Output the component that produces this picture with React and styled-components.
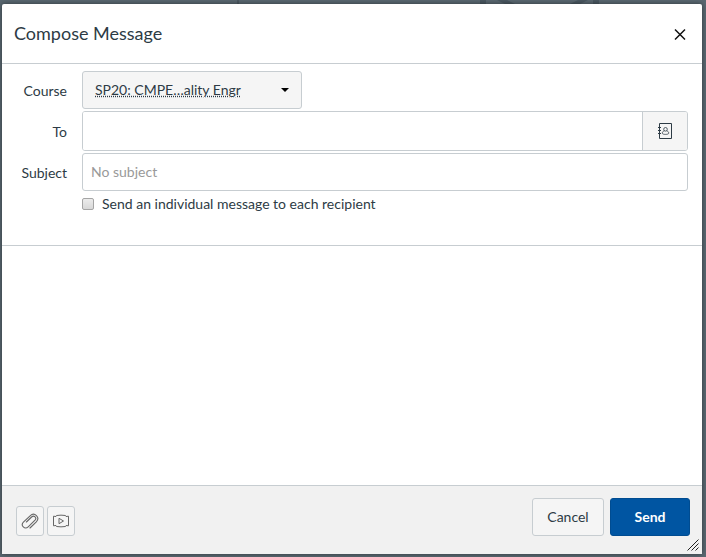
import React from "react";
import styled, { createGlobalStyle, css } from "styled-components";

const GlobalStyle = createGlobalStyle`
  *, *::before, *::after { box-sizing: border-box; }
  body {
    margin: 0;
    background: #5a6871;
    color: #2d3b45;
    font: 14px/20px Lato, sans-serif;
  }
  button, input, select, textarea { font: inherit; color: inherit; margin: 0; }
`;

const Page = styled.div`
  position: relative;
  display: flex;
  min-height: 100vh;
  padding: 4px 4px 3px 2px;
`;

const Backdrop = styled.svg`
  position: absolute;
  top: 0;
  left: 0;
  width: 100%;
  height: 4px;
`;

const Dialog = styled.form`
  position: relative;
  flex: 1;
  display: flex;
  flex-direction: column;
  min-width: 0;
  background: #fff;
  border-radius: 2px;
  box-shadow: 0 0 5px rgba(0, 0, 0, 0.5);
`;

const Header = styled.header`
  display: flex;
  align-items: center;
  justify-content: space-between;
  height: 60px;
  padding: 0 12px;
  border-bottom: 1px solid #c7cdd1;
`;

const Title = styled.h1`
  margin: 0;
  padding-bottom: 2px;
  font-size: 18px;
  line-height: 24px;
  font-weight: 400;
`;

const CloseButton = styled.button`
  display: flex;
  padding: 4px;
  border: 0;
  background: none;
  color: #111;
`;

const Fields = styled.section`
  display: grid;
  grid-template-columns: 65px 1fr;
  column-gap: 15px;
  row-gap: 2px;
  align-items: center;
  padding: 7px 14px 30px 0;
  border-bottom: 1px solid #c7cdd1;
`;

const Label = styled.label`
  text-align: right;
  padding-top: 2px;
`;

const outlined = css`
  border: 1px solid #c7cdd1;
  border-radius: 3px;
`;

const SelectWrap = styled.div`
  display: grid;
  align-items: center;
  width: 220px;
  > * { grid-area: 1 / 1; }
  > svg { justify-self: end; margin-right: 13px; pointer-events: none; }
`;

const Select = styled.select`
  ${outlined}
  appearance: none;
  width: 100%;
  height: 38px;
  padding: 0 32px 0 12px;
  background: #f5f5f5;
  text-decoration: underline dotted;
`;

const Recipients = styled.div`
  ${outlined}
  display: flex;
  height: 40px;
  overflow: hidden;
`;

const RecipientInput = styled.input`
  flex: 1;
  min-width: 0;
  padding: 0 8px;
  border: 0;
  background: #fff;
`;

const AddressButton = styled.button`
  display: flex;
  align-items: center;
  justify-content: center;
  width: 45px;
  padding: 0;
  border: 0;
  border-left: 1px solid #c7cdd1;
  background: #f5f5f5;
`;

const SubjectInput = styled.input`
  ${outlined}
  width: 100%;
  height: 38px;
  padding: 0 8px 2px;
  background: #fff;
  &::placeholder { color: #999; opacity: 1; }
`;

const CheckLabel = styled.label`
  grid-column: 2;
  display: flex;
  align-items: center;
  gap: 8px;
  height: 22px;
`;

const Checkbox = styled.input`
  appearance: none;
  width: 12px;
  height: 12px;
  border: 1px solid #a5a5a5;
  border-radius: 2px;
  background: linear-gradient(#ececec, #d8d8d8);
  &:checked { background: #0055a2; }
`;

const Message = styled.textarea`
  flex: 1;
  width: 100%;
  min-height: 80px;
  padding: 12px;
  border: 0;
  resize: none;
  background: #fff;
`;

const Footer = styled.footer`
  position: relative;
  display: flex;
  align-items: center;
  justify-content: space-between;
  padding: 12px 12px 18px 14px;
  border-top: 1px solid #c7cdd1;
  background: #f1f1f1;
`;

const Group = styled.div`
  display: flex;
  align-items: flex-end;
  align-self: flex-end;
  gap: ${(p) => p.$gap}px;
`;

const IconButton = styled.button`
  ${outlined}
  display: flex;
  align-items: center;
  justify-content: center;
  width: 28px;
  height: 30px;
  padding: 0;
  background: #f5f5f5;
  color: #666;
`;

const Button = styled.button`
  ${outlined}
  min-width: ${(p) => (p.$primary ? 80 : 72)}px;
  height: 38px;
  padding: 0 12px;
  background: #f5f5f5;
  ${(p) =>
    p.$primary &&
    css`
      border-color: #004c91;
      background: #0055a2;
      color: #fff;
      font-weight: 700;
    `}
`;

const ResizeGrip = styled.svg`
  position: absolute;
  right: 3px;
  bottom: 3px;
`;

export default function App() {
  return (
    <>
      <GlobalStyle />
      <Page>
        <Backdrop aria-hidden="true">
          <rect x="237" y="0" width="2" height="4" fill="#4c5962" />
          <path d="M480 0h6v4h-6zM497 0h10l8 4h-10zM578 0h10l-8 4h-10zM593 0h6v4h-6z" fill="#4a5861" />
        </Backdrop>
        <Dialog role="dialog" aria-labelledby="title" onSubmit={(e) => e.preventDefault()}>
          <Header>
            <Title id="title">Compose Message</Title>
            <CloseButton type="button" aria-label="Close">
              <svg width="12" height="12" viewBox="0 0 12 12" fill="none" stroke="currentColor" strokeWidth="1.5">
                <path d="M1 1.500l10 10M11 1.500L1 11.500" />
              </svg>
            </CloseButton>
          </Header>
          <Fields>
            <Label htmlFor="course">Course</Label>
            <SelectWrap>
              <Select id="course">
                <option>SP20: CMPE…ality Engr</option>
              </Select>
              <svg width="8" height="4" viewBox="0 0 8 4" aria-hidden="true">
                <path d="M0 0h8L4 4z" fill="#000" />
              </svg>
            </SelectWrap>
            <Label htmlFor="to">To</Label>
            <Recipients>
              <RecipientInput id="to" type="text" />
              <AddressButton type="button" aria-label="Address book">
                <svg width="15" height="16" viewBox="0 0 15 16" fill="none" stroke="#2d3b45">
                  <path d="M1.500 .5h12v15h-12z" />
                  <path d="M0 4.500h3M0 7.500h3M0 10.500h3" />
                  <circle cx="7.500" cy="6.300" r="1.800" strokeWidth=".8" />
                  <path d="M6.300 7.900C4.800 8.300 4.300 9 4.300 10.200c0 1.600 6.400 1.600 6.400 0 0-1.200-.5-1.900-2-2.300" strokeWidth=".8" />
                </svg>
              </AddressButton>
            </Recipients>
            <Label htmlFor="subject">Subject</Label>
            <SubjectInput id="subject" type="text" placeholder="No subject" />
            <CheckLabel>
              <Checkbox type="checkbox" />
              Send an individual message to each recipient
            </CheckLabel>
          </Fields>
          <Message aria-label="Message" />
          <Footer>
            <Group $gap={3}>
              <IconButton type="button" aria-label="Attach file">
                <svg width="18" height="18" viewBox="0 0 18 18" fill="none" stroke="currentColor" strokeWidth="1.1" strokeLinecap="round">
                  <path d="M9 16l6.300-6.200c4.200-4.400-1.800-10.200-6.200-6l-6.700 6.400c-3.200 3.400 1.400 7.800 4.800 4.600l6.800-6.600c2.200-2.400-1-5.400-3.400-3.200l-5.200 5" />
                </svg>
              </IconButton>
              <IconButton type="button" aria-label="Record media">
                <svg width="18" height="14" viewBox="0 0 18 14" fill="none" stroke="currentColor">
                  <path d="M1.500 2.200L4 2.500 4.500 1.500Q9 .8 13.500 1.500L14 2.500 16.500 2.200v9.600L14 11.500 13.500 12.500Q9 13.200 4.500 12.500L4 11.500 1.500 11.800z" />
                  <path d="M7 4.300v5.400L11.500 7z" />
                </svg>
              </IconButton>
            </Group>
            <Group $gap={6}>
              <Button type="button">Cancel</Button>
              <Button type="submit" $primary>Send</Button>
            </Group>
            <ResizeGrip width="12" height="12" viewBox="0 0 12 12" stroke="#222" aria-hidden="true">
              <path d="M.5 11.500L11.500 .5M4.500 11.500L11.500 4.500M8.500 11.500L11.500 8.500" />
            </ResizeGrip>
          </Footer>
        </Dialog>
      </Page>
    </>
  );
}
